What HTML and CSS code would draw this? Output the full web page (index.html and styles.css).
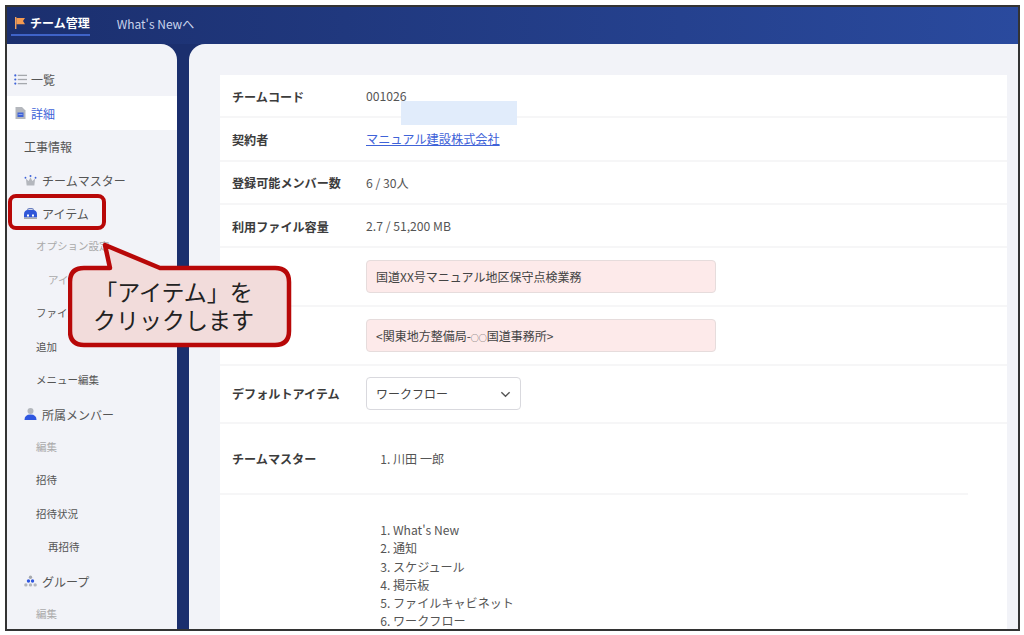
FILE: index.html
```html
<!DOCTYPE html>
<html lang="ja">
<head>
    <meta charset="UTF-8">
    <title>チーム管理</title>
    <link rel="stylesheet" href="styles.css">
</head>
<body>
<div class="frame">
    <header class="topbar">
        <a class="tab tab-active">
            <svg class="flag" viewBox="0 0 12 12"><path d="M1 0h1.400v12H1z" fill="#f0a060"/><path d="M2.400 1H11L9 4l2 3.200H2.400z" fill="#f59a50"/></svg>
            チーム管理
        </a>
        <a class="tab">What's Newへ</a>
    </header>

    <div class="columns">
        <nav class="sidebar">
            <a class="nav nav-top">
                <svg class="ico" viewBox="0 0 12 10"><g fill="#3f63d8"><circle cx="1.200" cy="1.200" r="1"/><circle cx="1.200" cy="5" r="1"/><circle cx="1.200" cy="8.800" r="1"/></g><g fill="#a5a8ad"><rect x="3.500" y=".6" width="8.500" height="1.200"/><rect x="3.500" y="4.400" width="8.500" height="1.200"/><rect x="3.500" y="8.200" width="8.500" height="1.200"/></g></svg>
                一覧
            </a>
            <a class="nav nav-top nav-current">
                <svg class="ico ico-doc" viewBox="0 0 10 12"><path d="M0 0h6.500L10 3.500V12H0z" fill="#b4b7bd"/><path d="M2 5.500h6V10H2z" fill="#3f63d8"/><path d="M3 7h4v.7H3z" fill="#b4c2ee"/></svg>
                詳細
            </a>
            <a class="nav nav-plain">工事情報</a>
            <a class="nav nav-main">
                <svg class="ico" viewBox="0 0 13 12"><path d="M1.500 4l3 2.500 2-4 2 4 3-2.500-.8 7.500H2.300z" fill="#b4b7bd"/><g fill="#3f63d8"><circle cx="1" cy="3" r="1"/><circle cx="6.500" cy="1.200" r="1.100"/><circle cx="12" cy="3" r="1"/></g></svg>
                チームマスター
            </a>
            <a class="nav nav-main">
                <svg class="ico" viewBox="0 0 13 11"><path d="M3.500 2.500Q3.500 .6 5 .6h3q1.500 0 1.500 1.900" fill="none" stroke="#6a7fc0" stroke-width="1.200"/><path d="M0 6.500Q0 2 4 2h5q4 0 4 4.500V9.500H0z" fill="#2f56d8"/><path d="M0 9.500h13V11H0z" fill="#a5a8ad"/><path d="M3 6.500h2v2H3zM8 6.500h2v2H8z" fill="#fff"/></svg>
                アイテム
            </a>
            <a class="nav nav-sub nav-off">オプション設定</a>
            <a class="nav nav-sub2 nav-off">アイテム設定</a>
            <a class="nav nav-sub">ファイル設定</a>
            <a class="nav nav-sub">追加</a>
            <a class="nav nav-sub">メニュー編集</a>
            <a class="nav nav-main">
                <svg class="ico ico-doc" viewBox="0 0 13 12"><circle cx="6.500" cy="3" r="3" fill="#b4b7bd"/><path d="M.5 12q0-5.500 6-5.500t6 5.500z" fill="#2f56e0"/></svg>
                所属メンバー
            </a>
            <a class="nav nav-sub nav-off">編集</a>
            <a class="nav nav-sub">招待</a>
            <a class="nav nav-sub">招待状況</a>
            <a class="nav nav-sub2">再招待</a>
            <a class="nav nav-main">
                <svg class="ico ico-doc" viewBox="0 0 14 12"><circle cx="7" cy="2" r="1.800" fill="#a5a8ad"/><g fill="#2f56e0"><circle cx="4.800" cy="6" r="1.800"/><circle cx="9.200" cy="6" r="1.800"/></g><g fill="#b4b7bd"><circle cx="2" cy="10.200" r="1.800"/><circle cx="7" cy="10.200" r="1.800"/><circle cx="12" cy="10.200" r="1.800"/></g></svg>
                グループ
            </a>
            <a class="nav nav-sub nav-off">編集</a>
        </nav>

        <main class="content">
            <div class="card">
                <div class="row">
                    <div class="label">チームコード</div>
                    <div class="value">001026</div>
                </div>
                <div class="row">
                    <div class="label">契約者</div>
                    <div class="value"><a class="link">マニュアル建設株式会社</a></div>
                </div>
                <div class="row">
                    <div class="label">登録可能メンバー数</div>
                    <div class="value">6 / 30人</div>
                </div>
                <div class="row">
                    <div class="label">利用ファイル容量</div>
                    <div class="value">2.7 / 51,200 MB</div>
                </div>
                <div class="row row-field">
                    <div class="label"></div>
                    <div class="input">国道XX号マニュアル地区保守点検業務</div>
                </div>
                <div class="row row-field">
                    <div class="label"></div>
                    <div class="input"><span>&lt;関東地方整備局-<span class="tiny">○○</span>国道事務所&gt;</span></div>
                </div>
                <div class="row row-field">
                    <div class="label">デフォルトアイテム</div>
                    <div class="select">
                        ワークフロー
                        <svg class="chevron" viewBox="0 0 12 7"><path d="M1.500 1l4.500 4.500L10.500 1" fill="none" stroke="#555" stroke-width="1.500"/></svg>
                    </div>
                </div>
                <div class="row row-master">
                    <div class="label">チームマスター</div>
                    <ol class="names"><li>川田 一郎</li></ol>
                </div>
                <div class="row-items">
                    <ol class="names">
                        <li>What's New</li>
                        <li>通知</li>
                        <li>スケジュール</li>
                        <li>掲示板</li>
                        <li>ファイルキャビネット</li>
                        <li>ワークフロー</li>
                    </ol>
                </div>
            </div>
        </main>
    </div>

    <!-- 注釈 -->
    <div class="mask"></div>
    <div class="highlight"></div>
    <div class="callout">
        <svg class="callout-shape" viewBox="0 0 230 110">
            <path d="M42 27L37 4 92 27H207Q221 27 221 41V90Q221 104 207 104H16Q2 104 2 90V41Q2 27 16 27Z" fill="#f2dcdb" stroke="#b80808" stroke-width="4.500" stroke-linejoin="round"/>
        </svg>
        <div class="callout-text">「アイテム」を<br>クリックします</div>
    </div>
</div>
</body>
</html>
```

FILE: styles.css
```css
* {
    box-sizing: border-box;
}

body {
    margin: 0;
    padding: 5px 4px 4px 5px;
    height: 635px;
    overflow: hidden;
    background: #fff;
    font-family: "Noto Sans CJK JP", "Noto Sans", sans-serif;
    font-size: 12px;
    color: #444;
}

.frame {
    position: relative;
    width: 1015px;
    height: 626px;
    border: 2px solid #333;
    overflow: hidden;
    background: #1b2f6e;
}

/* ヘッダー */
.topbar {
    height: 37px;
    display: flex;
    align-items: flex-start;
    padding-left: 4px;
    gap: 27px;
    background: linear-gradient(90deg, #1b2f6e, #2a4a9e);
}

.tab {
    display: flex;
    align-items: center;
    height: 29px;
    padding-top: 5px;
    color: #c9d3ec;
    line-height: 1;
}

.tab-active {
    gap: 4px;
    padding: 5px 0 0 3px;
    border-bottom: 2px solid #3f63c8;
    color: #fff;
    font-weight: 700;
}

.flag {
    width: 12px;
    height: 12px;
}

/* 本体 */
.columns {
    display: flex;
    gap: 12px;
    height: 585px;
}

.sidebar {
    flex: 0 0 170px;
    padding-top: 19px;
    background: #f2f3f8;
    border-top-right-radius: 16px;
}

.nav {
    display: flex;
    align-items: center;
    height: 33.45px;
    color: #555;
    white-space: nowrap;
}

.nav-top {
    gap: 4px;
    padding-left: 7px;
}

.nav-current {
    background: #fff;
    color: #3f63d8;
}

.nav-plain {
    padding-left: 17px;
}

.nav-main {
    gap: 5px;
    padding-left: 17px;
}

.nav-sub {
    padding: 0 0 2px 29px;
    font-size: 10.5px;
}

.nav-sub2 {
    padding: 0 0 2px 41px;
    font-size: 10.5px;
}

.nav-off {
    color: #aaa;
}

.ico {
    width: 13px;
    height: 11px;
    flex: none;
}

.ico-doc {
    height: 12px;
}

.content {
    flex: 1;
    padding: 31px 11px 0 31px;
    background: #f2f3f8;
    border-top-left-radius: 16px;
}

.card {
    height: 560px;
    background: #fff;
}

.row {
    display: flex;
    align-items: center;
    height: 43.3px;
    padding: 1px 0 0 12px;
    border-bottom: 2px solid #f6f6f7;
}

.row-field {
    height: 58.7px;
    padding-top: 0;
}

.row-master {
    height: 71px;
    padding-top: 0;
    margin-right: 39px;
}

.row-items {
    padding: 26px 0 0 146px;
}

.label {
    flex: 0 0 134px;
    font-size: 12.1px;
    font-weight: 700;
    color: #3c3c3c;
}

.value {
    font-size: 12.2px;
    color: #555;
}

.link {
    color: #3f63d8;
    text-decoration: underline;
}

.input {
    width: 350px;
    height: 33px;
    padding: 0 9px;
    display: flex;
    align-items: center;
    background: #fdeaea;
    border: 1px solid #e6dcdc;
    border-radius: 4px;
    color: #444;
}

.tiny {
    font-size: 8px;
}

.select {
    position: relative;
    width: 155px;
    height: 33px;
    padding: 0 9px;
    display: flex;
    align-items: center;
    background: #fff;
    border: 1px solid #d9d9de;
    border-radius: 4px;
    color: #444;
}

.chevron {
    position: absolute;
    right: 9px;
    top: 13px;
    width: 11px;
    height: 7px;
}

.names {
    margin: 0;
    padding-left: 27px;
    font-size: 12.1px;
    line-height: 18.2px;
    color: #555;
}

/* 注釈 */
.mask {
    position: absolute;
    left: 394px;
    top: 94px;
    width: 116px;
    height: 24px;
    background: #e1ecfb;
}

.highlight {
    position: absolute;
    left: 1px;
    top: 187px;
    width: 98px;
    height: 36px;
    border: 4px solid #b80808;
    border-radius: 8px;
}

.callout {
    position: absolute;
    left: 61px;
    top: 234px;
    width: 230px;
    height: 110px;
}

.callout-shape {
    display: block;
    width: 230px;
    height: 110px;
}

.callout-text {
    position: absolute;
    left: 0;
    top: 36px;
    width: 211px;
    text-align: center;
    font-size: 23px;
    line-height: 28px;
    color: #222;
}
```
